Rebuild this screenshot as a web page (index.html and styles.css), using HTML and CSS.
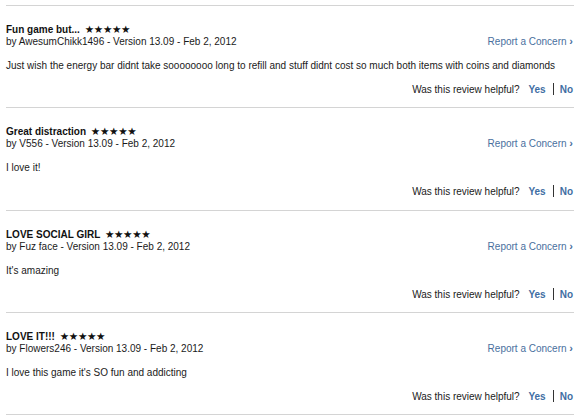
FILE: index.html
```html
<!DOCTYPE html>
<html>
<head>
<meta charset="utf-8">
<link rel="stylesheet" href="styles.css">
</head>
<body>
<div class="reviews">
  <div class="review">
    <div class="head">
      <div class="meta">
        <div class="title">Fun game but... <span class="stars">★★★★★</span></div>
        <div class="byline">by AwesumChikk1496 - Version 13.09 - Feb 2, 2012</div>
      </div>
      <a class="report">Report a Concern <span class="chev">›</span></a>
    </div>
    <p class="body">Just wish the energy bar didnt take soooooooo long to refill and stuff didnt cost so much both items with coins and diamonds</p>
    <div class="helpful">Was this review helpful? <a class="vote">Yes</a><span class="sep"></span><a class="vote">No</a></div>
  </div>
  <div class="review">
    <div class="head">
      <div class="meta">
        <div class="title">Great distraction <span class="stars">★★★★★</span></div>
        <div class="byline">by V556 - Version 13.09 - Feb 2, 2012</div>
      </div>
      <a class="report">Report a Concern <span class="chev">›</span></a>
    </div>
    <p class="body">I love it!</p>
    <div class="helpful">Was this review helpful? <a class="vote">Yes</a><span class="sep"></span><a class="vote">No</a></div>
  </div>
  <div class="review">
    <div class="head">
      <div class="meta">
        <div class="title">LOVE SOCIAL GIRL <span class="stars">★★★★★</span></div>
        <div class="byline">by Fuz face - Version 13.09 - Feb 2, 2012</div>
      </div>
      <a class="report">Report a Concern <span class="chev">›</span></a>
    </div>
    <p class="body">It's amazing</p>
    <div class="helpful">Was this review helpful? <a class="vote">Yes</a><span class="sep"></span><a class="vote">No</a></div>
  </div>
  <div class="review">
    <div class="head">
      <div class="meta">
        <div class="title">LOVE IT!!! <span class="stars">★★★★★</span></div>
        <div class="byline">by Flowers246 - Version 13.09 - Feb 2, 2012</div>
      </div>
      <a class="report">Report a Concern <span class="chev">›</span></a>
    </div>
    <p class="body">I love this game it's SO fun and addicting</p>
    <div class="helpful">Was this review helpful? <a class="vote">Yes</a><span class="sep"></span><a class="vote">No</a></div>
  </div>
</div>
</body>
</html>
```
FILE: styles.css
```css
html, body {
  margin: 0;
  padding: 0;
  background: #fff;
}
body {
  font-family: "Liberation Sans", Arial, sans-serif;
  font-size: 10px;
  color: #1a1a1a;
}
.reviews {
  margin: 5px 6px 0 6px;
  border-top: 1px solid #d4d4d4;
}
.review {
  border-bottom: 1px solid #d4d4d4;
  padding: 18px 0 11px;
  height: 72.3px;
}
.head {
  display: flex;
  justify-content: space-between;
  align-items: flex-end;
}
.title {
  font-weight: bold;
  font-size: 10px;
  line-height: 12px;
  color: #111;
}
.stars {
  font-family: "DejaVu Sans", sans-serif;
  font-size: 10.5px;
  line-height: 10px;
  margin-left: 2px;
  letter-spacing: -0.3px;
}
.byline {
  line-height: 12px;
}
.report {
  color: #4a6f9e;
  line-height: 12px;
  margin-right: 1px;
}
.chev {
  font-weight: bold;
  font-size: 11px;
}
.body {
  margin: 12px 0 0;
  line-height: 12px;
}
.helpful {
  margin-top: 11px;
  text-align: right;
  line-height: 12px;
  padding-right: 1px;
}
.vote {
  color: #3f6ea3;
  font-weight: bold;
  margin-left: 6px;
}
.sep {
  display: inline-block;
  width: 1px;
  height: 12px;
  background: #333;
  vertical-align: -2px;
  margin-left: 7px;
  margin-right: 0;
}
```
